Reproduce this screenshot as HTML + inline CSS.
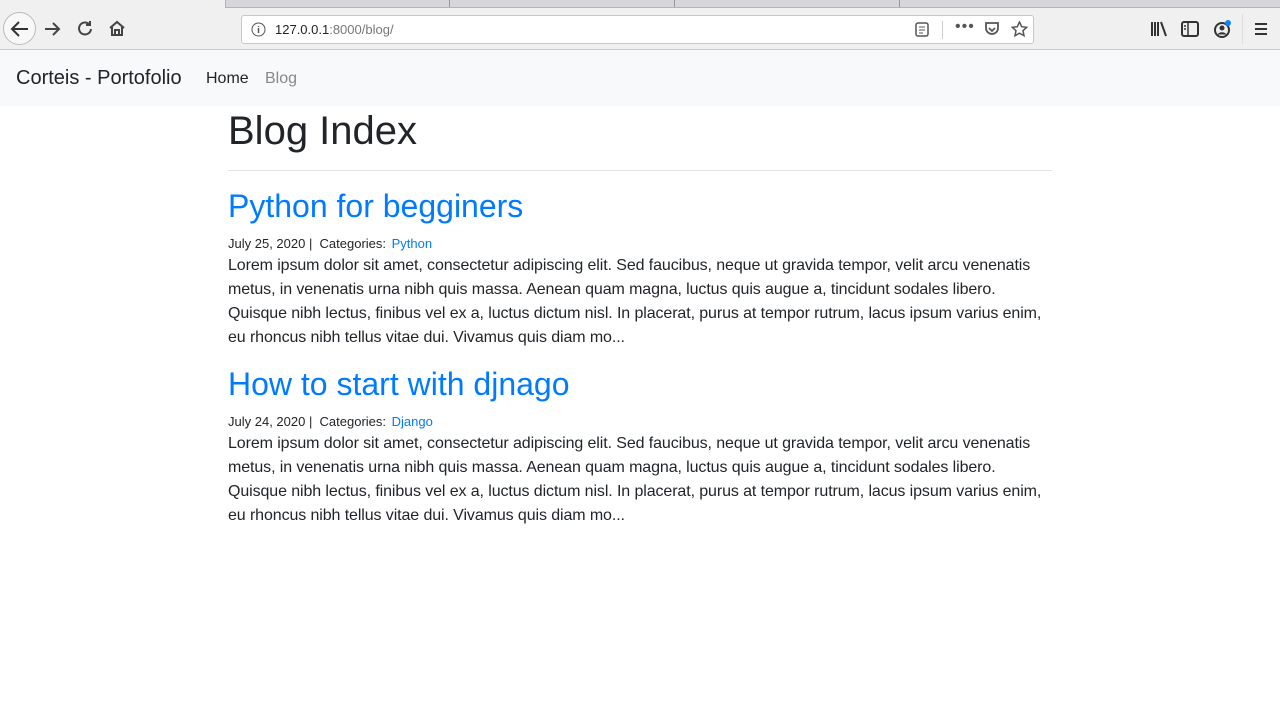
<!DOCTYPE html>
<html><head><style>
*{margin:0;padding:0;box-sizing:border-box}
body{width:1280px;height:719px;overflow:hidden;font-family:"Liberation Sans",sans-serif;background:#fff;color:#212529;position:relative}
.tabs{position:absolute;top:0;left:0;width:1280px;height:8px;background:#f0f0f0}
.tabs .g{position:absolute;left:225px;top:0;right:0;height:8px;background:#d7d7db;border-bottom:1px solid #b5b5b5;border-left:1px solid #b5b5b5}
.tabs .s{position:absolute;top:0;width:1px;height:7px;background:#999}
.tb{position:absolute;top:8px;left:0;width:1280px;height:42px;background:#f0f0f0;border-bottom:1px solid #ccc}
.url{position:absolute;left:241px;top:7px;width:793px;height:29px;background:#fff;border:1px solid #c8c8c8;border-radius:3px;font-size:13px;line-height:27px;padding-left:33px;color:#222}
.url span{color:#777}
.nav{position:absolute;top:50px;left:0;width:1280px;height:56px;background:#f8f9fa}
.brand{position:absolute;left:16px;top:17px;font-size:20px;color:#212529}
.nl{position:absolute;top:20px;font-size:16px}
.main{position:absolute;left:228px;top:106px;width:824px}
h1{font-size:40px;font-weight:400;line-height:48px;margin-top:1px}
hr{border:0;border-top:1px solid #e3e3e3;margin-top:15px}
h2{font-size:32px;font-weight:400;color:#007bff;line-height:38px}
.meta{font-size:13px;line-height:20px;margin-top:9px}
.meta a{color:#007bff;margin-left:2px}
p{font-size:16px;line-height:24px;letter-spacing:-0.1px}
</style></head><body>
<div class="tabs"><div class="g"></div><div class="s" style="left:449px"></div><div class="s" style="left:674px"></div><div class="s" style="left:899px"></div></div>
<div class="tb">
<div style="position:absolute;left:3px;top:4px;width:33px;height:33px;border:1px solid #bbb;border-radius:50%;background:#f8f8f8"></div>
<svg style="position:absolute;left:10px;top:12px" width="20" height="18" viewBox="0 0 20 18"><path d="M18 9H3M9 2L2 9l7 7" stroke="#333" stroke-width="2" fill="none"/></svg>
<svg style="position:absolute;left:44px;top:13px" width="18" height="16" viewBox="0 0 18 16"><path d="M1 8h14M9 2l6 6-6 6" stroke="#444" stroke-width="2" fill="none"/></svg>
<svg style="position:absolute;left:77px;top:12px" width="17" height="17" viewBox="0 0 17 17"><path d="M14 9a6 6 0 1 1-2-5M13 1v4H9" stroke="#444" stroke-width="2" fill="none"/></svg>
<svg style="position:absolute;left:108px;top:12px" width="18" height="17" viewBox="0 0 18 17"><path d="M2 8L9 2l7 6M4 7v8h10V7M7 15v-5h4v5" stroke="#444" stroke-width="2" fill="none"/></svg>
<div class="url"><svg style="position:absolute;left:9px;top:6px" width="15" height="15" viewBox="0 0 15 15"><circle cx="7.5" cy="7.5" r="6.5" stroke="#555" fill="none"/><path d="M7.5 6v5M7.5 4v1" stroke="#555" stroke-width="1.5"/></svg>127.0.0.1<span>:8000/blog/</span>
<svg style="position:absolute;left:673px;top:6px" width="14" height="15" viewBox="0 0 14 15"><rect x="1" y="1" width="12" height="13" rx="2" stroke="#555" fill="none" stroke-width="1.5"/><path d="M4 5h6M4 8h6M4 11h4" stroke="#555"/></svg>
<div style="position:absolute;left:700px;top:5px;width:1px;height:18px;background:#ccc"></div>
<div style="position:absolute;left:713px;top:-3px;color:#555;font-size:16px;letter-spacing:1px">•••</div>
<svg style="position:absolute;left:742px;top:6px" width="16" height="15" viewBox="0 0 16 15"><path d="M2 1h12v5a6 6 0 0 1-12 0z" stroke="#555" stroke-width="1.8" fill="none"/><path d="M5 6l3 3 3-3" stroke="#555" stroke-width="1.8" fill="none"/></svg>
<svg style="position:absolute;left:769px;top:5px" width="17" height="17" viewBox="0 0 17 17"><path d="M8.5 1l2.2 4.7 5 .6-3.7 3.4 1 5-4.5-2.5-4.5 2.5 1-5L1.3 6.3l5-.6z" stroke="#555" stroke-width="1.5" fill="none"/></svg>
</div>
<svg style="position:absolute;left:1150px;top:13px" width="18" height="16" viewBox="0 0 18 16"><path d="M2 1v14M5 1v14M8 1v14M11 1l5 14" stroke="#333" stroke-width="2"/></svg>
<svg style="position:absolute;left:1181px;top:13px" width="18" height="16" viewBox="0 0 18 16"><rect x="1" y="1" width="16" height="14" rx="2" stroke="#333" stroke-width="2" fill="none"/><path d="M7 1v14M3 5h2M3 8h2" stroke="#333" stroke-width="1.5"/></svg>
<svg style="position:absolute;left:1213px;top:11px" width="20" height="20" viewBox="0 0 20 20"><circle cx="9" cy="11" r="7" stroke="#333" stroke-width="2" fill="none"/><circle cx="9" cy="9" r="2.5" fill="#333"/><path d="M4.5 15.5a5 4 0 0 1 9 0" fill="#333"/><circle cx="15" cy="4" r="3" fill="#0a84ff"/></svg>
<div style="position:absolute;left:1242px;top:6px;width:1px;height:30px;background:#ddd"></div>
<svg style="position:absolute;left:1254px;top:14px" width="14" height="14" viewBox="0 0 14 14"><path d="M1 2h12M1 7h12M1 12h12" stroke="#333" stroke-width="2"/></svg>
</div>
<div class="nav"><div class="brand">Corteis - Portofolio</div><div class="nl" style="left:206px;color:#212529">Home</div><div class="nl" style="left:265px;color:#888">Blog</div></div>
<div class="main">
<h1>Blog Index</h1>
<hr>
<h2 style="margin-top:16px">Python for begginers</h2>
<div class="meta">July 25, 2020 |&nbsp; Categories: <a>Python</a></div>
<p>Lorem ipsum dolor sit amet, consectetur adipiscing elit. Sed faucibus, neque ut gravida tempor, velit arcu venenatis metus, in venenatis urna nibh quis massa. Aenean quam magna, luctus quis augue a, tincidunt sodales libero. Quisque nibh lectus, finibus vel ex a, luctus dictum nisl. In placerat, purus at tempor rutrum, lacus ipsum varius enim, eu rhoncus nibh tellus vitae dui. Vivamus quis diam mo...</p>
<h2 style="margin-top:15px">How to start with djnago</h2>
<div class="meta">July 24, 2020 |&nbsp; Categories: <a>Django</a></div>
<p>Lorem ipsum dolor sit amet, consectetur adipiscing elit. Sed faucibus, neque ut gravida tempor, velit arcu venenatis metus, in venenatis urna nibh quis massa. Aenean quam magna, luctus quis augue a, tincidunt sodales libero. Quisque nibh lectus, finibus vel ex a, luctus dictum nisl. In placerat, purus at tempor rutrum, lacus ipsum varius enim, eu rhoncus nibh tellus vitae dui. Vivamus quis diam mo...</p>
</div>
</body></html>
